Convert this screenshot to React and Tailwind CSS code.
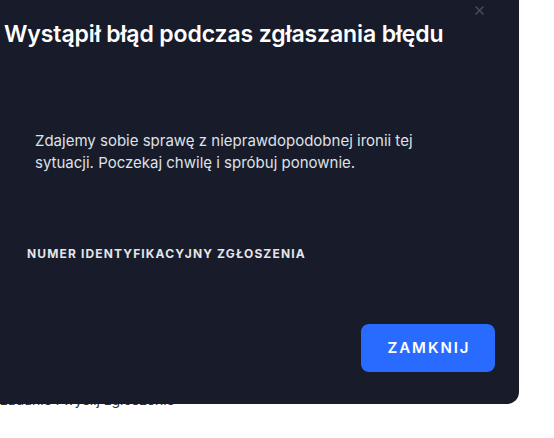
export default function App() {
  return (
    <div className="w-[554px] h-[438px] bg-white overflow-hidden" style={{ fontFamily: 'Inter, "Noto Sans", sans-serif' }}>
      <div className="relative z-10 w-[519px] h-[404px] bg-[#181b2a] rounded-br-[12px] flex flex-col">
        <button className="absolute top-[5px] right-[35px] w-[10px] h-[10px] flex items-center justify-center text-[#4a4e5c]">
          <svg width="9" height="9" viewBox="0 0 9 9" fill="none" stroke="currentColor" strokeWidth="1.4">
            <path d="M0.5 0.5 L8.5 8.5 M8.5 0.5 L0.5 8.5" />
          </svg>
        </button>
        <h1 className="pl-[4px] pt-[20px] text-[23px] leading-[28px] font-semibold text-white tracking-[-0.005em] whitespace-nowrap">
          Wystąpił błąd podczas zgłaszania błędu
        </h1>
        <p className="pl-[35px] pt-[82px] w-[440px] text-[15px] leading-[22px] text-[#dfe1e6]">
          Zdajemy sobie sprawę z nieprawdopodobnej ironii tej sytuacji. Poczekaj chwilę i spróbuj ponownie.
        </p>
        <div className="pl-[27px] pt-[72px] text-[12px] leading-[16px] font-bold uppercase tracking-[0.095em] text-[#e3e5e9]">
          Numer identyfikacyjny zgłoszenia
        </div>
        <div className="mt-auto flex justify-end pr-[24px] pb-[32px]">
          <button className="w-[134px] h-[48px] rounded-[8px] bg-[#2a6bff] text-white text-[15px] font-semibold tracking-[0.13em] pl-[2px]">
            ZAMKNIJ
          </button>
        </div>
      </div>
      <div className="-mt-[12px] text-[14px] leading-[16px] text-[#2e3035] whitespace-nowrap">
        zadanie i wyślij zgłoszenie
      </div>
    </div>
  );
}
